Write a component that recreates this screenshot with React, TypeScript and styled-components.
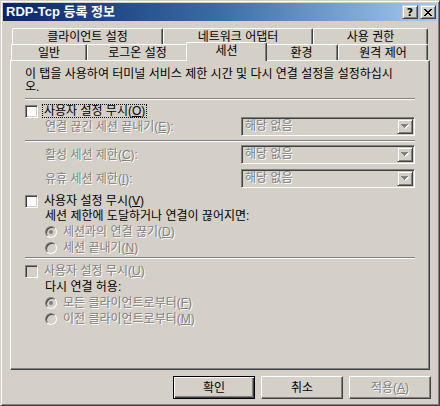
import type { FC, ReactNode } from 'react'
import styled, { createGlobalStyle } from 'styled-components'

const FACE = '#d4d0c8'
const SHADOW = '#808080'
const DARK = '#404040'

const GlobalStyle = createGlobalStyle`
  html, body {
    margin: 0;
    padding: 0;
    background: ${FACE};
  }
  body {
    font-family: "Liberation Sans", "Noto Sans CJK KR", sans-serif;
    font-size: 12px;
    color: #000;
  }
  * {
    box-sizing: border-box;
  }
`

const Window = styled.div`
  width: 440px;
  height: 406px;
  display: flex;
  flex-direction: column;
  padding: 2px;
  background: ${FACE};
  border: 1px solid;
  border-color: ${FACE} ${DARK} ${DARK} ${FACE};
  box-shadow:
    inset 1px 1px #fff,
    inset -1px -1px ${SHADOW};
`

const TitleBar = styled.div`
  height: 18px;
  flex: 0 0 18px;
  display: flex;
  align-items: center;
  justify-content: space-between;
  padding: 0 1px 0 3px;
  background: linear-gradient(to right, #0a246a 0%, #3a6ea5 50%, #a6caf0 100%);
`

const TitleText = styled.span`
  color: #fff;
  font-weight: bold;
  font-size: 13px;
  line-height: 18px;
  white-space: nowrap;
`

const CaptionButtons = styled.div`
  display: flex;
  gap: 2px;
`

const CaptionButton = styled.div`
  width: 16px;
  height: 14px;
  display: flex;
  align-items: center;
  justify-content: center;
  background: ${FACE};
  border: 1px solid;
  border-color: ${FACE} ${DARK} ${DARK} ${FACE};
  box-shadow:
    inset 1px 1px #fff,
    inset -1px -1px ${SHADOW};
  font-family: "DejaVu Sans", sans-serif;
  font-weight: bold;
  font-size: 11px;
  line-height: 1;
`

const Body = styled.div`
  flex: 1;
  display: flex;
  flex-direction: column;
  padding: 7px 7px 4px 7px;
`

const TabRow = styled.div<{ $indent: number }>`
  display: flex;
  height: 16px;
  padding-left: ${(p) => p.$indent}px;
`

const Tab = styled.div<{ $width: number; $selected?: boolean }>`
  width: ${(p) => p.$width + (p.$selected ? 4 : 0)}px;
  height: ${(p) => (p.$selected ? 19 : 16)}px;
  margin: ${(p) => (p.$selected ? '-2px -2px -1px' : '0')};
  position: relative;
  z-index: ${(p) => (p.$selected ? 2 : 0)};
  display: flex;
  align-items: center;
  justify-content: center;
  padding-bottom: ${(p) => (p.$selected ? 2 : 0)}px;
  background: ${FACE};
  border-top: 1px solid #fff;
  border-left: 1px solid #fff;
  border-right: 1px solid ${DARK};
  border-radius: 2px 2px 0 0;
  box-shadow: inset -1px 0 ${SHADOW};
  line-height: 14px;
  white-space: nowrap;
`

const Panel = styled.div`
  height: 310px;
  flex: 0 0 310px;
  display: flex;
  flex-direction: column;
  padding: 7px 14px 0 14px;
  background: ${FACE};
  border: 1px solid;
  border-color: #fff ${DARK} ${DARK} #fff;
  box-shadow: inset -1px -1px ${SHADOW};
`

const Description = styled.div`
  line-height: 13px;
  white-space: nowrap;
`

const Separator = styled.div<{ $mt: number }>`
  height: 2px;
  flex: 0 0 2px;
  margin-top: ${(p) => p.$mt}px;
  border-top: 1px solid ${SHADOW};
  border-bottom: 1px solid #fff;
`

const CheckRow = styled.div<{ $mt: number }>`
  display: flex;
  align-items: center;
  gap: 4px;
  height: 14px;
  margin-top: ${(p) => p.$mt}px;
`

const CheckBox = styled.div<{ $disabled?: boolean }>`
  width: 13px;
  height: 13px;
  flex: 0 0 13px;
  background: ${(p) => (p.$disabled ? FACE : '#fff')};
  border: 1px solid;
  border-color: ${SHADOW} #fff #fff ${SHADOW};
  box-shadow:
    inset 1px 1px ${DARK},
    inset -1px -1px ${FACE};
`

const Label = styled.span<{ $disabled?: boolean; $focus?: boolean }>`
  white-space: nowrap;
  line-height: 12px;
  color: ${(p) => (p.$disabled ? SHADOW : '#000')};
  text-shadow: ${(p) => (p.$disabled ? '1px 1px 0 #fff' : 'none')};
  border: 1px dotted ${(p) => (p.$focus ? '#000' : 'transparent')};
  padding: 0 1px;
`

const Mn = styled.span`
  text-decoration: underline;
`

const FieldRow = styled.div<{ $mt: number }>`
  display: flex;
  align-items: center;
  height: 19px;
  margin-top: ${(p) => p.$mt}px;
  padding-left: 20px;
`

const FieldLabel = styled(Label)`
  width: 196px;
  flex: 0 0 196px;
  border: none;
  padding: 0;
`

const Combo = styled.div`
  width: 174px;
  height: 19px;
  display: flex;
  align-items: center;
  background: ${FACE};
  border: 1px solid;
  border-color: ${SHADOW} #fff #fff ${SHADOW};
  box-shadow:
    inset 1px 1px ${DARK},
    inset -1px -1px ${FACE};
  padding: 1px;
`

const ComboText = styled.span`
  flex: 1;
  padding-left: 2px;
  color: ${SHADOW};
  text-shadow: 1px 1px 0 #fff;
  line-height: 15px;
  white-space: nowrap;
`

const DropButton = styled.div`
  width: 16px;
  height: 15px;
  flex: 0 0 16px;
  display: flex;
  align-items: center;
  justify-content: center;
  background: ${FACE};
  border: 1px solid;
  border-color: ${FACE} ${DARK} ${DARK} ${FACE};
  box-shadow:
    inset 1px 1px #fff,
    inset -1px -1px ${SHADOW};
`

const TextRow = styled.div<{ $mt?: number }>`
  height: 16px;
  line-height: 16px;
  margin-top: ${(p) => p.$mt ?? 0}px;
  padding-left: 20px;
  white-space: nowrap;
`

const RadioRow = styled.div`
  display: flex;
  align-items: center;
  gap: 4px;
  height: 16px;
  padding-left: 20px;
`

const RadioCircle = styled.div<{ $disabled?: boolean }>`
  width: 12px;
  height: 12px;
  flex: 0 0 12px;
  display: flex;
  align-items: center;
  justify-content: center;
  border-radius: 50%;
  background: ${(p) => (p.$disabled ? FACE : '#fff')};
  border: 1px solid;
  border-color: ${SHADOW} #fff #fff ${SHADOW};
  box-shadow: inset 1px 1px ${DARK};
`

const RadioDot = styled.div<{ $disabled?: boolean }>`
  width: 4px;
  height: 4px;
  border-radius: 50%;
  background: ${(p) => (p.$disabled ? SHADOW : '#000')};
`

const ButtonRow = styled.div`
  display: flex;
  justify-content: flex-end;
  gap: 6px;
  margin-top: 6px;
  margin-right: -1px;
`

const DialogButton = styled.div<{ $default?: boolean; $disabled?: boolean }>`
  width: 82px;
  height: 23px;
  display: flex;
  align-items: center;
  justify-content: center;
  background: ${FACE};
  border: 1px solid;
  border-color: ${(p) => (p.$default ? '#000' : `#fff ${DARK} ${DARK} #fff`)};
  box-shadow: ${(p) =>
    p.$default
      ? `inset 1px 1px #fff, inset -1px -1px ${DARK}, inset -2px -2px ${SHADOW}`
      : `inset -1px -1px ${SHADOW}`};
  color: ${(p) => (p.$disabled ? SHADOW : '#000')};
  text-shadow: ${(p) => (p.$disabled ? '1px 1px 0 #fff' : 'none')};
  line-height: 14px;
`

const CloseGlyph: FC = () => (
  <svg width="8" height="7" viewBox="0 0 8 7" shapeRendering="crispEdges">
    <path d="M0 0h2v1H0zM6 0h2v1H6zM1 1h2v1H1zM5 1h2v1H5zM2 2h4v1H2zM3 3h2v1H3zM2 4h4v1H2zM1 5h2v1H1zM5 5h2v1H5zM0 6h2v1H0zM6 6h2v1H6z" fill="#000" />
  </svg>
)

const DropArrow: FC = () => (
  <svg width="8" height="5" viewBox="0 0 8 5" shapeRendering="crispEdges">
    <path d="M1 1h7v1H1zM2 2h5v1H2zM3 3h3v1H3zM4 4h1v1H4z" fill="#fff" />
    <path d="M0 0h7v1H0zM1 1h5v1H1zM2 2h3v1H2zM3 3h1v1H3z" fill={SHADOW} />
  </svg>
)

interface ComboFieldProps {
  label: ReactNode
  mt: number
}

const ComboField: FC<ComboFieldProps> = ({ label, mt }) => (
  <FieldRow $mt={mt}>
    <FieldLabel $disabled>{label}</FieldLabel>
    <Combo>
      <ComboText>해당 없음</ComboText>
      <DropButton>
        <DropArrow />
      </DropButton>
    </Combo>
  </FieldRow>
)

interface RadioProps {
  checked?: boolean
  disabled?: boolean
  children: ReactNode
}

const Radio: FC<RadioProps> = ({ checked, disabled, children }) => (
  <RadioRow>
    <RadioCircle $disabled={disabled}>{checked && <RadioDot $disabled={disabled} />}</RadioCircle>
    <Label $disabled={disabled}>{children}</Label>
  </RadioRow>
)

const topTabs = [
  { label: '클라이언트 설정', width: 151 },
  { label: '네트워크 어댑터', width: 150 },
  { label: '사용 권한', width: 115 }
]

const frontTabs = [
  { label: '일반', width: 76 },
  { label: '로그온 설정', width: 101 },
  { label: '세션', width: 77, selected: true },
  { label: '환경', width: 73 },
  { label: '원격 제어', width: 90 }
]

const App: FC = () => {
  return (
    <>
      <GlobalStyle />
      <Window>
        <TitleBar>
          <TitleText>RDP-Tcp 등록 정보</TitleText>
          <CaptionButtons>
            <CaptionButton>?</CaptionButton>
            <CaptionButton>
              <CloseGlyph />
            </CaptionButton>
          </CaptionButtons>
        </TitleBar>
        <Body>
          <TabRow $indent={2}>
            {topTabs.map((t) => (
              <Tab key={t.label} $width={t.width}>
                {t.label}
              </Tab>
            ))}
          </TabRow>
          <TabRow $indent={1}>
            {frontTabs.map((t) => (
              <Tab key={t.label} $width={t.width} $selected={t.selected}>
                {t.label}
              </Tab>
            ))}
          </TabRow>
          <Panel>
            <Description>
              이 탭을 사용하여 터미널 서비스 제한 시간 및 다시 연결 설정을 설정하십시
              <br />
              오.
            </Description>
            <Separator $mt={4} />
            <CheckRow $mt={4}>
              <CheckBox />
              <Label $focus>
                사용자 설정 무시(<Mn>O</Mn>)
              </Label>
            </CheckRow>
            <ComboField
              mt={-1}
              label={
                <>
                  연결 끊긴 세션 끝내기(<Mn>E</Mn>):
                </>
              }
            />
            <Separator $mt={4} />
            <ComboField
              mt={3}
              label={
                <>
                  활성 세션 제한(<Mn>C</Mn>):
                </>
              }
            />
            <ComboField
              mt={5}
              label={
                <>
                  유휴 세션 제한(<Mn>I</Mn>):
                </>
              }
            />
            <CheckRow $mt={6}>
              <CheckBox />
              <Label>
                사용자 설정 무시(<Mn>V</Mn>)
              </Label>
            </CheckRow>
            <TextRow>세션 제한에 도달하거나 연결이 끊어지면:</TextRow>
            <Radio checked disabled>
              세션과의 연결 끊기(<Mn>D</Mn>)
            </Radio>
            <Radio disabled>
              세션 끝내기(<Mn>N</Mn>)
            </Radio>
            <Separator $mt={1} />
            <CheckRow $mt={5}>
              <CheckBox $disabled />
              <Label $disabled>
                사용자 설정 무시(<Mn>U</Mn>)
              </Label>
            </CheckRow>
            <TextRow $mt={1}>다시 연결 허용:</TextRow>
            <Radio checked disabled>
              모든 클라이언트로부터(<Mn>F</Mn>)
            </Radio>
            <Radio disabled>
              이전 클라이언트로부터(<Mn>M</Mn>)
            </Radio>
          </Panel>
          <ButtonRow>
            <DialogButton $default>확인</DialogButton>
            <DialogButton>취소</DialogButton>
            <DialogButton $disabled>
              적용(<Mn>A</Mn>)
            </DialogButton>
          </ButtonRow>
        </Body>
      </Window>
    </>
  )
}

export default App
